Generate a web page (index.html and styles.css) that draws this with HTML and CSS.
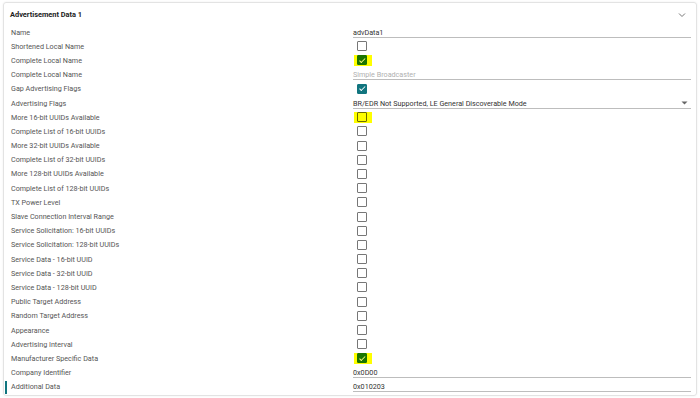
FILE: index.html
```html
<!DOCTYPE html>
<html>
<head>
<meta charset="utf-8">
<link rel="stylesheet" href="styles.css">
</head>
<body>
<div class="card">
  <div class="head">
    <span class="title">Advertisement Data 1</span>
    <svg class="chev" width="8" height="6" viewBox="0 0 8 6"><path d="M1 1.5 L4 4.5 L7 1.5" fill="none" stroke="#777" stroke-width="1"/></svg>
  </div>
  <div class="rows">
    <div class="row"><span class="lab">Name</span><span class="val"><span class="input">advData1</span></span></div>
    <div class="row"><span class="lab">Shortened Local Name</span><span class="val"><span class="cb"></span></span></div>
    <div class="row"><span class="lab">Complete Local Name</span><span class="val"><span class="hl"><span class="cb on"></span></span></span></div>
    <div class="row"><span class="lab">Complete Local Name</span><span class="val"><span class="input ph">Simple Broadcaster</span></span></div>
    <div class="row"><span class="lab">Gap Advertising Flags</span><span class="val"><span class="cb on"></span></span></div>
    <div class="row"><span class="lab">Advertising Flags</span><span class="val"><span class="input sel">BR/EDR Not Supported, LE General Discoverable Mode<svg class="tri" width="7" height="4" viewBox="0 0 7 4"><path d="M0.5 0.5 L6.5 0.5 L3.5 3.5 Z" fill="#666"/></svg></span></span></div>
    <div class="row"><span class="lab">More 16-bit UUIDs Available</span><span class="val"><span class="hl"><span class="cb"></span></span></span></div>
    <div class="row"><span class="lab">Complete List of 16-bit UUIDs</span><span class="val"><span class="cb"></span></span></div>
    <div class="row"><span class="lab">More 32-bit UUIDs Available</span><span class="val"><span class="cb"></span></span></div>
    <div class="row"><span class="lab">Complete List of 32-bit UUIDs</span><span class="val"><span class="cb"></span></span></div>
    <div class="row"><span class="lab">More 128-bit UUIDs Available</span><span class="val"><span class="cb"></span></span></div>
    <div class="row"><span class="lab">Complete List of 128-bit UUIDs</span><span class="val"><span class="cb"></span></span></div>
    <div class="row"><span class="lab">TX Power Level</span><span class="val"><span class="cb"></span></span></div>
    <div class="row"><span class="lab">Slave Connection Interval Range</span><span class="val"><span class="cb"></span></span></div>
    <div class="row"><span class="lab">Service Solicitation: 16-bit UUIDs</span><span class="val"><span class="cb"></span></span></div>
    <div class="row"><span class="lab">Service Solicitation: 128-bit UUIDs</span><span class="val"><span class="cb"></span></span></div>
    <div class="row"><span class="lab">Service Data - 16-bit UUID</span><span class="val"><span class="cb"></span></span></div>
    <div class="row"><span class="lab">Service Data - 32-bit UUID</span><span class="val"><span class="cb"></span></span></div>
    <div class="row"><span class="lab">Service Data - 128-bit UUID</span><span class="val"><span class="cb"></span></span></div>
    <div class="row"><span class="lab">Public Target Address</span><span class="val"><span class="cb"></span></span></div>
    <div class="row"><span class="lab">Random Target Address</span><span class="val"><span class="cb"></span></span></div>
    <div class="row"><span class="lab">Appearance</span><span class="val"><span class="cb"></span></span></div>
    <div class="row"><span class="lab">Advertising Interval</span><span class="val"><span class="cb"></span></span></div>
    <div class="row"><span class="lab">Manufacturer Specific Data</span><span class="val"><span class="hl"><span class="cb on"></span></span></span></div>
    <div class="row"><span class="lab">Company Identifier</span><span class="val"><span class="input">0x0D00</span></span></div>
    <div class="row active"><span class="lab">Additional Data</span><span class="val"><span class="input">0x010203</span></span></div>
  </div>
</div>
</body>
</html>
```

FILE: styles.css
```css
html, body {
  margin: 0;
  padding: 0;
  background: #ffffff;
}
body {
  font-family: Roboto, "Liberation Sans", sans-serif;
  font-size: 7.2px;
  color: #555;
}
.card {
  margin: 2px 3px 2px 3px;
  height: 394px;
  box-sizing: border-box;
  border: 1px solid #e3e3e3;
  border-radius: 3px;
  box-shadow: 0 0 2px rgba(0,0,0,0.08);
  display: flex;
  flex-direction: column;
}
.head {
  height: 22px;
  display: flex;
  align-items: center;
  justify-content: space-between;
  padding: 0 10px 0 6px;
}
.title {
  font-weight: 700;
  color: #222;
  font-size: 7.4px;
}
.chev {
  display: block;
  margin-top: 1px;
}
.rows {
  display: flex;
  flex-direction: column;
}
.row {
  height: 14.2px;
  display: grid;
  grid-template-columns: 349px 338px;
  align-items: center;
  position: relative;
}
.lab {
  padding-left: 7px;
  color: #555;
  white-space: nowrap;
}
.row.active::before {
  content: "";
  position: absolute;
  left: 1px;
  top: 1px;
  bottom: 0;
  width: 2px;
  background: #11757f;
}
.val {
  display: flex;
  align-items: center;
  height: 100%;
}
.input {
  flex: 1;
  display: flex;
  align-items: center;
  justify-content: space-between;
  height: 11px;
  padding-top: 1px;
  box-sizing: border-box;
  border-bottom: 1px solid #bdbdbd;
  color: #333;
  white-space: nowrap;
}
.input.ph {
  color: #b0b0b0;
}
.tri {
  display: block;
  margin-right: 3px;
}
.cb {
  display: block;
  width: 8px;
  height: 8px;
  border: 1px solid #777;
  border-radius: 1px;
  margin-left: 4px;
  position: relative;
  background: #fff;
}
.cb.on {
  background: #11757f;
  border-color: #11757f;
}
.cb.on::after {
  content: "";
  position: absolute;
  left: 2.5px;
  top: 0.5px;
  width: 2px;
  height: 4.5px;
  border: solid #fff;
  border-width: 0 1.2px 1.2px 0;
  transform: rotate(45deg);
}
.hl {
  display: flex;
  align-items: center;
  background: #ffff00;
  height: 11px;
  width: 18px;
  margin-left: 1px;
}
.hl .cb {
  margin-left: 3px;
  border-color: #6b6b00;
  background: #ffff00;
}
.hl .cb.on {
  background: #1a7500;
  border-color: #1a7500;
}
.hl .cb.on::after {
  border-color: #ffff80;
}
```
